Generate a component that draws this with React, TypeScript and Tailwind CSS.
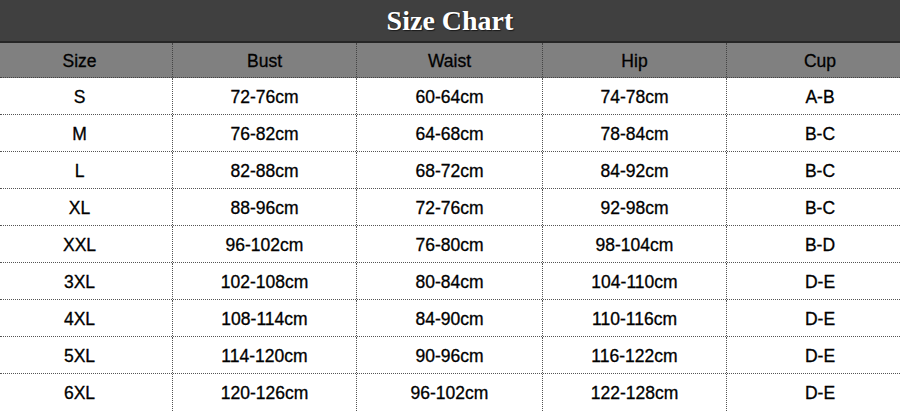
const columns = ['Size', 'Bust', 'Waist', 'Hip', 'Cup'];

const rows = [
  ['S', '72-76cm', '60-64cm', '74-78cm', 'A-B'],
  ['M', '76-82cm', '64-68cm', '78-84cm', 'B-C'],
  ['L', '82-88cm', '68-72cm', '84-92cm', 'B-C'],
  ['XL', '88-96cm', '72-76cm', '92-98cm', 'B-C'],
  ['XXL', '96-102cm', '76-80cm', '98-104cm', 'B-D'],
  ['3XL', '102-108cm', '80-84cm', '104-110cm', 'D-E'],
  ['4XL', '108-114cm', '84-90cm', '110-116cm', 'D-E'],
  ['5XL', '114-120cm', '90-96cm', '116-122cm', 'D-E'],
  ['6XL', '120-126cm', '96-102cm', '122-128cm', 'D-E'],
];

const cellWidths = ['w-[173px] pr-[13px]', 'w-[184px]', 'w-[186px]', 'w-[184px]', 'flex-1 pl-[13px]'];

export default function App() {
  return (
    <div className="w-[900px] h-[413px] overflow-hidden bg-white font-['Liberation_Sans',Arial,sans-serif] text-[17.5px] text-black [-webkit-text-stroke:0.3px_#000]">
      {/* Title */}
      <div className="h-[43px] bg-[#404040] flex items-center justify-center border-b-2 border-[#262626]">
        <h1 className="font-['Liberation_Serif','Times_New_Roman',serif] font-bold text-[28px] text-white leading-none [-webkit-text-stroke:0] [text-shadow:1px_1px_1px_#1a1a1a]">
          Size Chart
        </h1>
      </div>

      {/* Header */}
      <div className="flex h-[35px] bg-[#808080] border-b border-dotted border-[#444]">
        {columns.map((c, i) => (
          <div
            key={c}
            className={`${cellWidths[i]} flex items-center justify-center pt-[3px] ${i < 4 ? 'border-r border-dotted border-[#444]' : ''}`}
          >
            {c}
          </div>
        ))}
      </div>

      {/* Body */}
      {rows.map((row, r) => (
        <div
          key={row[0]}
          className={`flex h-[37px] ${r < rows.length - 1 ? 'border-b border-dotted border-[#555]' : ''}`}
        >
          {row.map((v, i) => (
            <div
              key={i}
              className={`${cellWidths[i]} flex items-center justify-center pt-[2px] ${i < 4 ? 'border-r border-dotted border-[#555]' : ''}`}
            >
              {v}
            </div>
          ))}
        </div>
      ))}
    </div>
  );
}
